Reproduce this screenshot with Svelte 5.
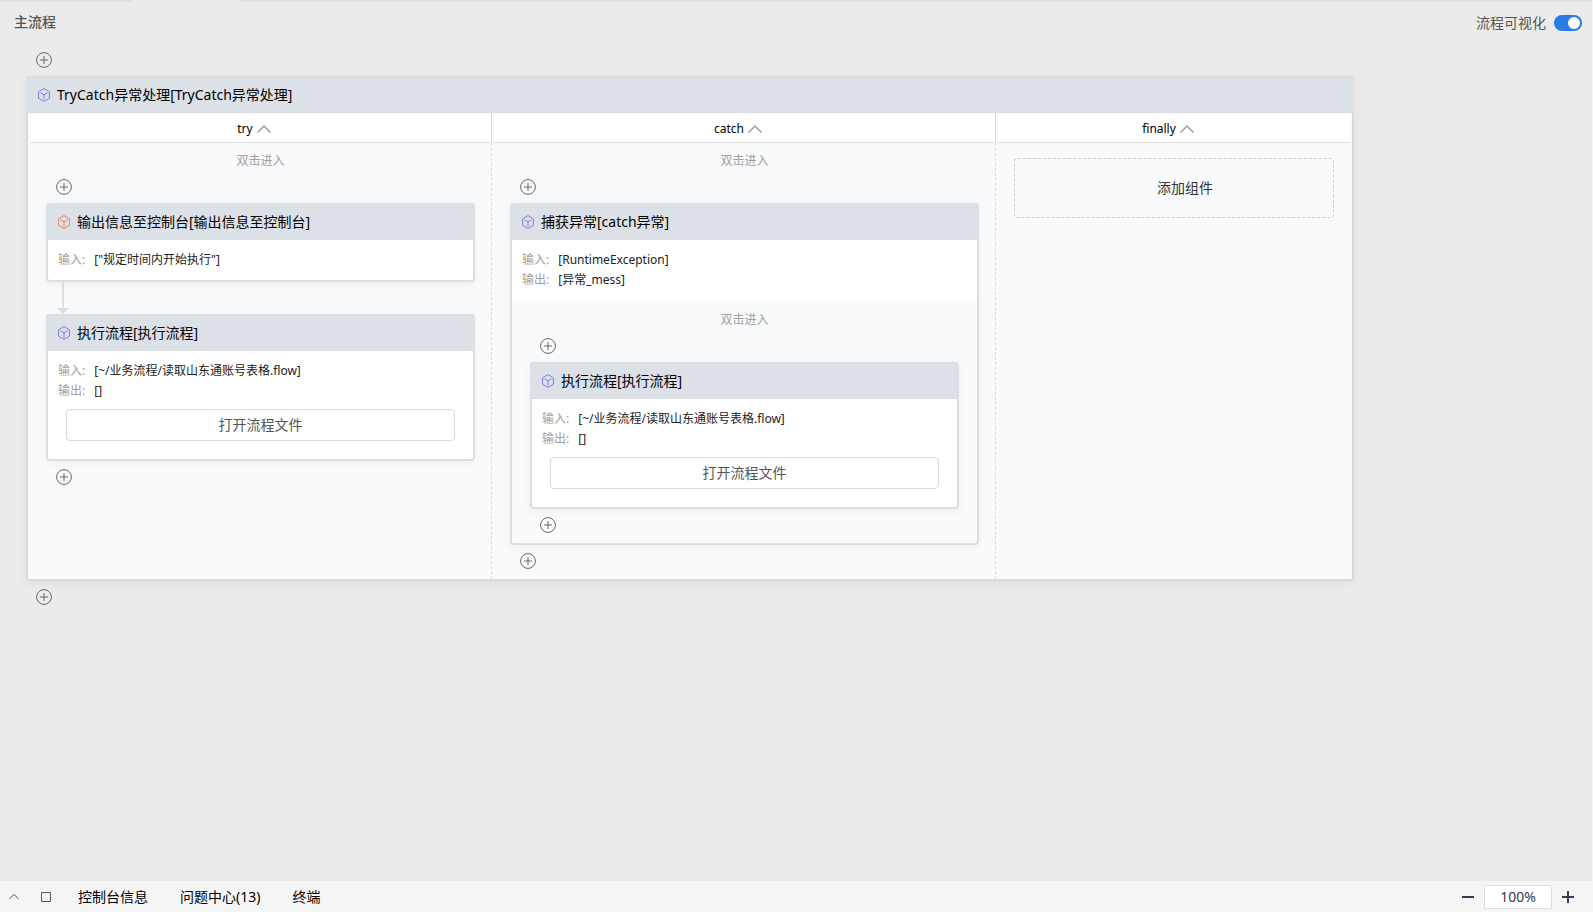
<script lang="ts">
  const entry = {
    title: 'TryCatch异常处理[TryCatch异常处理]',
    tone: 'violet',
  };

  const runFlow = {
    title: '执行流程[执行流程]',
    tone: 'violet',
    rows: [
      ['输入:', '[~/业务流程/读取山东通账号表格.flow]'],
      ['输出:', '[]'],
    ],
    action: '打开流程文件',
  };

  const branches = [
    {
      name: 'try',
      nodes: [
        {
          title: '输出信息至控制台[输出信息至控制台]',
          tone: 'orange',
          rows: [['输入:', '["规定时间内开始执行"]']],
        },
        runFlow,
      ],
    },
    {
      name: 'catch',
      nodes: [
        {
          title: '捕获异常[catch异常]',
          tone: 'violet',
          rows: [
            ['输入:', '[RuntimeException]'],
            ['输出:', '[异常_mess]'],
          ],
          children: [runFlow],
        },
      ],
    },
    { name: 'finally', nodes: [] },
  ];

  let visual = $state(true);
  let zoom = $state('100%');
</script>

{#snippet cube(tone)}
  <svg class="cube {tone}" viewBox="0 0 12 14" aria-hidden="true">
    <path d="M6 .6 11.4 3.7v6.6L6 13.4.6 10.3V3.7ZM2.4 4.7 6 6.9l3.6-2.2M6 6.9v4.6" />
  </svg>
{/snippet}

{#snippet add()}
  <button class="add" aria-label="添加">
    <svg viewBox="0 0 16 16" aria-hidden="true">
      <circle cx="8" cy="8" r="7.4" />
      <path d="M4 8h8M8 4v8" />
    </svg>
  </button>
{/snippet}

{#snippet head(node)}
  <header class="node-head">
    {@render cube(node.tone)}
    <span>{node.title}</span>
  </header>
{/snippet}

{#snippet chain(nodes)}
  <button class="hint">双击进入</button>
  {@render add()}
  {#each nodes as node, i}
    {#if i > 0}
      <div class="arrow"></div>
    {/if}
    {@render card(node)}
  {/each}
  {@render add()}
{/snippet}

{#snippet card(node)}
  <article class="node" class:leaf={!node.children}>
    {@render head(node)}
    <dl class="params">
      {#each node.rows as [label, value]}
        <div>
          <dt>{label}</dt>
          <dd>{value}</dd>
        </div>
      {/each}
    </dl>
    {#if node.action}
      <div class="action"><button>{node.action}</button></div>
    {/if}
    {#if node.children}
      <div class="inner">{@render chain(node.children)}</div>
    {/if}
  </article>
{/snippet}

<div class="app">
  <div class="tabs"><span class="active"></span></div>
  <div class="topbar">
    <h1>主流程</h1>
    <label class="toggle">
      <span>流程可视化</span>
      <input type="checkbox" role="switch" bind:checked={visual} />
    </label>
  </div>

  <main>
    {@render add()}
    <section class="node root">
      {@render head(entry)}
      <div class="branches">
        {#each branches as branch}
          <div class="branch">
            <div class="branch-head">
              <button>
                {branch.name}
                <svg viewBox="0 0 14 8" aria-hidden="true"><path d="M.5 7.5 7 1l6.5 6.5" /></svg>
              </button>
            </div>
            <div class="branch-body">
              {#if branch.nodes.length}
                {@render chain(branch.nodes)}
              {:else}
                <button class="drop">添加组件</button>
              {/if}
            </div>
          </div>
        {/each}
      </div>
    </section>
    {@render add()}
  </main>

  <footer>
    <button class="icon" aria-label="展开">
      <svg viewBox="0 0 10 10" aria-hidden="true"><path d="M.5 7 5 2.3 9.5 7" /></svg>
    </button>
    <button class="icon" aria-label="最大化">
      <svg viewBox="0 0 10 10" aria-hidden="true"><path d="M.5.5h9v9h-9Z" /></svg>
    </button>
    <nav>
      <button>控制台信息</button>
      <button>问题中心(13)</button>
      <button>终端</button>
    </nav>
    <div class="zoom">
      <button aria-label="缩小">
        <svg viewBox="0 0 12 12" aria-hidden="true"><path d="M0 6h12" /></svg>
      </button>
      <input type="text" aria-label="缩放比例" bind:value={zoom} />
      <button aria-label="放大">
        <svg viewBox="0 0 12 12" aria-hidden="true"><path d="M0 6h12M6 0v12" /></svg>
      </button>
    </div>
  </footer>
</div>

<style>
  .app {
    display: flex;
    flex-direction: column;
    box-sizing: border-box;
    min-height: 100vh;
    border-right: 1px solid #f5f5f5;
    background: #ebebeb;
    color: #000;
    font: 14px/20px "Noto Sans", "Noto Sans CJK SC", sans-serif;
  }

  button,
  input {
    margin: 0;
    padding: 0;
    border: 0;
    background: none;
    color: inherit;
    font: inherit;
  }

  svg {
    display: block;
    fill: none;
    stroke: currentColor;
  }

  .tabs {
    height: 2px;
    background: #e0e0e0;
  }

  .tabs .active {
    display: block;
    width: 109px;
    height: 2px;
    margin-left: 131px;
    background: #ebebeb;
  }

  .topbar {
    display: flex;
    align-items: center;
    justify-content: space-between;
    height: 42px;
    padding: 0 10px 0 14px;
    color: #555;
  }

  h1 {
    margin: 0;
    padding-bottom: 2px;
    font-size: 14px;
    font-weight: 500;
  }

  .toggle {
    display: flex;
    align-items: center;
    gap: 8px;
  }

  .toggle input {
    appearance: none;
    display: flex;
    box-sizing: border-box;
    width: 28px;
    height: 16px;
    padding: 2px;
    border-radius: 8px;
    background: #aaa;
  }

  .toggle input::before {
    content: "";
    width: 12px;
    height: 12px;
    border-radius: 50%;
    background: #fff;
  }

  .toggle input:checked {
    justify-content: flex-end;
    background: #2a7be4;
  }

  main {
    flex: 1;
    display: flex;
    flex-direction: column;
    align-items: flex-start;
    padding: 0 26px;
  }

  .add {
    display: block;
    margin: 8px 10px;
    color: #666;
  }

  .add svg {
    width: 16px;
    height: 16px;
  }

  .node {
    border: 2px solid #dcdee0;
    border-radius: 4px;
    background: #fff;
    box-shadow: 0 2px 8px rgba(0, 0, 0, 0.05);
  }

  .leaf {
    box-sizing: border-box;
    width: 429px;
  }

  .root {
    border-color: #d9dadc;
    box-shadow: 0 2px 10px rgba(0, 0, 0, 0.06);
  }

  .node-head {
    display: flex;
    align-items: center;
    gap: 7px;
    box-sizing: border-box;
    height: 37px;
    margin: -2px -2px 0;
    padding: 0 12px;
    border: solid #dcdde0;
    border-width: 1px 0;
    border-radius: 4px 4px 0 0;
    background: #dce0e7;
  }

  .cube {
    width: 12px;
    height: 14px;
  }

  .violet {
    color: #7b80e6;
  }

  .orange {
    color: #f07f55;
  }

  .params {
    margin: 0;
    padding: 10px;
    font-size: 12px;
  }

  .params div {
    display: flex;
    gap: 9px;
  }

  dt {
    color: #a0a0a0;
  }

  dd {
    margin: 0;
    color: #222;
  }

  .action {
    padding: 0 18px 18px;
    margin-top: -2px;
  }

  .action button {
    box-sizing: border-box;
    width: 100%;
    height: 32px;
    border: 1px solid #d9d9d9;
    border-radius: 4px;
    background: #fff;
    color: #555;
  }

  .inner {
    padding: 2px 18px;
    background: #f9fafc;
    border-radius: 0 0 4px 4px;
  }

  .hint {
    display: block;
    width: 100%;
    padding-top: 8px;
    color: #a0a0a0;
    font-size: 12px;
    line-height: 20px;
  }

  .arrow {
    display: flex;
    flex-direction: column;
    align-items: center;
    width: 12px;
    height: 32px;
    margin-left: 11px;
    color: #dcdee0;
  }

  .arrow::before {
    content: "";
    flex: 1;
    width: 2px;
    background: currentColor;
  }

  .arrow::after {
    content: "";
    border: 6px solid transparent;
    border-top-color: currentColor;
    border-bottom: 0;
  }

  .branches {
    display: flex;
    background: #f9fafc;
  }

  .branch {
    display: flex;
    flex-direction: column;
  }

  .branch-head {
    padding: 2px 1px 0 2px;
    border-right: 1px solid #dedede;
  }

  .branch-head button {
    display: flex;
    align-items: center;
    justify-content: center;
    gap: 4px;
    width: 100%;
    height: 28px;
    padding-right: 12px;
    border-bottom: 1px solid #dedede;
    background: #fff;
    font-size: 12px;
  }

  .branch-head svg {
    width: 14px;
    height: 8px;
    color: #999;
    stroke-width: 1.4;
  }

  .branch-body {
    flex: 1;
    padding: 0 16px 2px 18px;
    border-right: 1px dashed #dcdcdc;
  }

  .branch:last-child .branch-head {
    padding-right: 2px;
    border-right: 0;
  }

  .branch:last-child .branch-body {
    padding: 15px 18px;
    border-right: 0;
  }

  .drop {
    box-sizing: border-box;
    width: 320px;
    height: 60px;
    padding-left: 22px;
    border: 1px dashed #ccc;
    border-radius: 4px;
    color: #333;
  }

  footer {
    display: flex;
    align-items: center;
    height: 31px;
    padding: 0 18px 0 9px;
    background: #f5f5f5;
  }

  .icon {
    margin-right: 22px;
    color: #555;
  }

  .icon + .icon {
    margin-right: 27px;
  }

  .icon svg {
    width: 10px;
    height: 10px;
  }

  nav {
    display: flex;
    gap: 32px;
  }

  .zoom {
    display: flex;
    align-items: center;
    gap: 10px;
    margin-left: auto;
    color: #2c3e50;
  }

  .zoom svg {
    width: 12px;
    height: 12px;
    stroke-width: 2;
  }

  .zoom input {
    box-sizing: border-box;
    width: 68px;
    height: 24px;
    border: 1px solid #dcdcdc;
    border-radius: 2px;
    background: #fff;
    text-align: center;
  }
</style>
